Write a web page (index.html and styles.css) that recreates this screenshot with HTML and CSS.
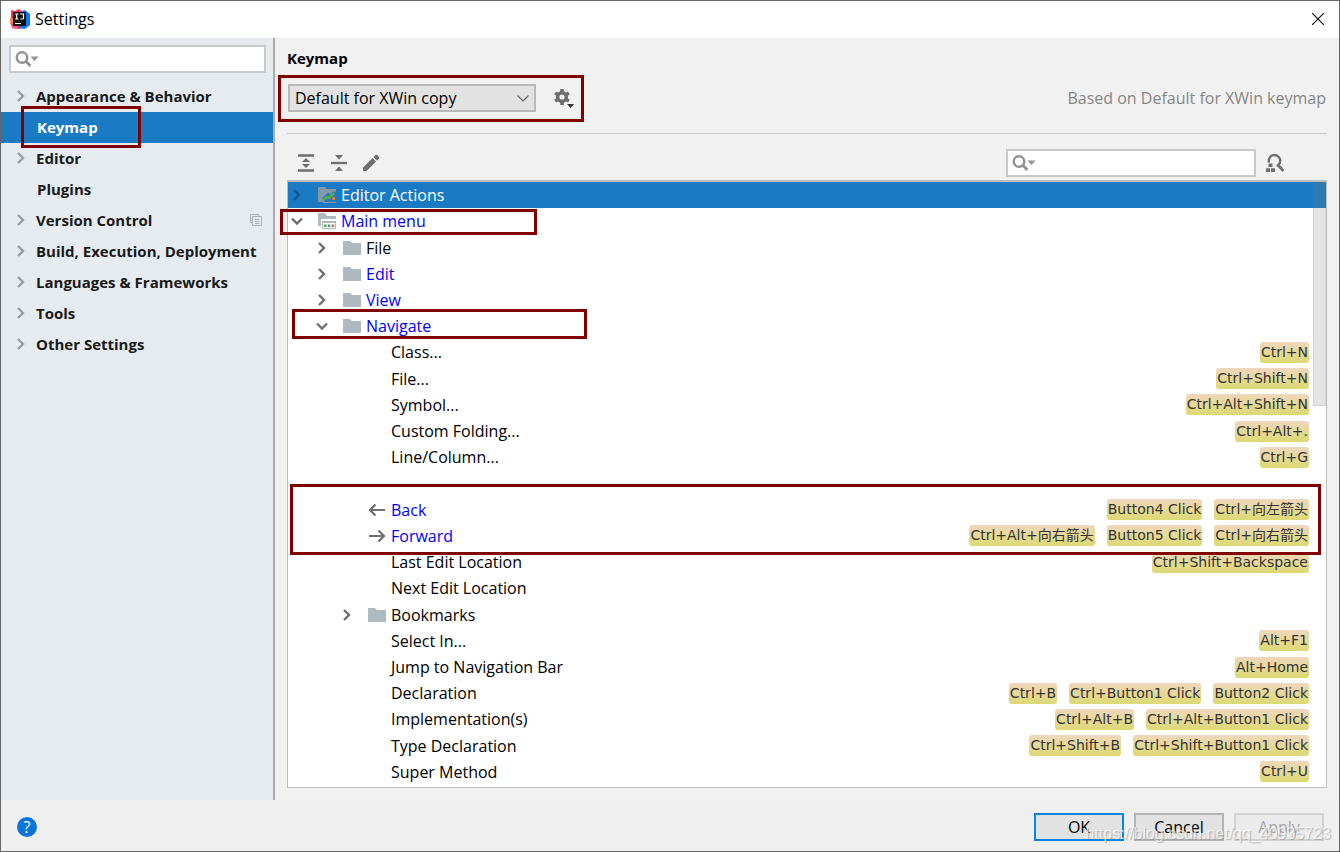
FILE: index.html
```html
<!DOCTYPE html>
<html lang="en">
<head>
<meta charset="utf-8">
<title>Settings</title>
<link rel="stylesheet" href="styles.css">
</head>
<body>
<svg class="sprite" aria-hidden="true">
  <symbol id="right" viewBox="0 0 12 12"><path d="M3 1l5 5-5 5" fill="none" stroke="currentColor" stroke-width="2.4"/></symbol>
  <symbol id="down" viewBox="0 0 12 12"><path d="M1 3.500l5 5 5-5" fill="none" stroke="currentColor" stroke-width="2.4"/></symbol>
  <symbol id="folder" viewBox="0 0 18 16"><path d="M0 1h7l2 2h9v12H0z" fill="#aeb9c0"/></symbol>
  <symbol id="search" viewBox="0 0 24 18"><circle cx="7" cy="7.500" r="5.300" fill="none" stroke="#919191" stroke-width="2.4"/><path d="M10.800 11.300l4.600 4.700" stroke="#919191" stroke-width="2.8"/><path d="M15.500 6.500h8l-4 4.500z" fill="#919191"/></symbol>
</svg>
<div class="window">
  <header class="titlebar">
    <svg class="logo" viewBox="0 0 20 20" aria-hidden="true">
      <path d="M1 1l4 1 4-2 4 3 1 9-4 8-8-1-2-6 1-4z" fill="#fe315d"/>
      <path d="M0 9l4 1v5l-4-1z" fill="#f98a4c"/>
      <path d="M12 2l3-1 5 4v11l-5 4-6-1z" fill="#087cfa"/>
      <path d="M2 14l6 3-1 3-5-1z" fill="#f05a78"/>
      <path d="M3 3h13v14H3z" fill="#111"/>
      <path d="M5 5h3.500M6.700 5v5M5 10h3.500M10 5h3.500v4q0 1-1 1h-2M5 14.500h6" fill="none" stroke="#fff" stroke-width="1.200"/>
    </svg>
    <h1 class="window-title">Settings</h1>
    <button class="close" aria-label="Close"><svg viewBox="0 0 12 12"><path d="M0 0l12 12M12 0L0 12" stroke="#000" stroke-width="1.1"/></svg></button>
  </header>

  <div class="body">
    <aside class="sidebar">
      <label class="search"><svg><use href="#search"/></svg><input type="text" aria-label="Search settings"></label>
      <nav>
        <ul class="nav">
          <li><svg class="chev"><use href="#right"/></svg><a href="#">Appearance &amp; Behavior</a></li>
          <li class="active"><a class="leaf" href="#">Keymap</a><span class="mark mark-nav"></span></li>
          <li><svg class="chev"><use href="#right"/></svg><a href="#">Editor</a></li>
          <li><a class="leaf" href="#">Plugins</a></li>
          <li><svg class="chev"><use href="#right"/></svg><a href="#">Version Control</a>
            <svg class="copy" viewBox="0 0 12 12"><path d="M.5 8.500v-8h8v1M2.500 2.500h9v9h-9zM5 5.500h4.500M5 7.500h4.500M5 9.500h4.500M.5 8.500h2" fill="none" stroke="#a9b4bc"/></svg></li>
          <li><svg class="chev"><use href="#right"/></svg><a href="#">Build, Execution, Deployment</a></li>
          <li><svg class="chev"><use href="#right"/></svg><a href="#">Languages &amp; Frameworks</a></li>
          <li><svg class="chev"><use href="#right"/></svg><a href="#">Tools</a></li>
          <li><svg class="chev"><use href="#right"/></svg><a href="#">Other Settings</a></li>
        </ul>
      </nav>
    </aside>

    <main class="content">
      <h2 class="heading">Keymap</h2>
      <div class="scheme">
        <div class="scheme-pick">
          <select aria-label="Keymap scheme"><option>Default for XWin copy</option></select>
          <svg class="select-arrow" viewBox="0 0 12 7"><path d="M.5.5L6 6 11.500.5" fill="none" stroke="#666" stroke-width="1.2"/></svg>
          <button class="icon-btn gear" aria-label="Scheme actions">
            <svg viewBox="0 0 20 20"><g fill="none" stroke="#6e6e6e"><circle cx="8" cy="9" r="4.300" stroke-width="3.400"/><path d="M8 1v3M8 14v3M1.100 5l2.600 1.500M12.300 11.500l2.600 1.500M1.100 13l2.600-1.500M12.300 6.500L14.900 5" stroke-width="3.600"/></g><path d="M13 16h7l-3.500 4z" fill="#333"/></svg>
          </button>
          <span class="mark mark-scheme"></span>
        </div>
        <span class="based">Based on Default for XWin keymap</span>
      </div>

      <div class="toolbar">
        <button class="icon-btn" aria-label="Expand all"><svg viewBox="0 0 18 18"><path d="M1 1.500h16M1 16.500h16" stroke="#6e6e6e" stroke-width="2.400"/><path d="M5 8l4-4 4 4zM5 10h8l-4 4z" fill="#6e6e6e"/></svg></button>
        <button class="icon-btn" aria-label="Collapse all"><svg viewBox="0 0 18 18"><path d="M1 9h16" stroke="#6e6e6e" stroke-width="2.400"/><path d="M5 1h8L9 5.500zM5 17h8l-4-4.500z" fill="#6e6e6e"/></svg></button>
        <button class="icon-btn" aria-label="Edit shortcut"><svg viewBox="0 0 18 18"><path d="M0 13.500L9.500 4 13 7.500 3.500 17H0zM10.500 3L12.500 1q.8-.7 1.600 0L16 2.900q.7.800 0 1.600L14 6.500z" fill="#6e6e6e"/></svg></button>
        <label class="search tree-search"><svg><use href="#search"/></svg><input type="text" aria-label="Search actions"></label>
        <button class="icon-btn" aria-label="Find by shortcut"><svg viewBox="0 0 18 18"><path d="M2.800 8.500V7a5.700 5.700 0 1 1 8 5" fill="none" stroke="#6e6e6e" stroke-width="2.400"/><path d="M12 11l5.500 6" stroke="#6e6e6e" stroke-width="2.800"/><path d="M2.500 9.500h4v3.500h-4zM0 14.200h4V18H0zM5 14.200h4V18H5z" fill="#6e6e6e"/></svg></button>
      </div>

      <div class="tree-box">
        <ul class="tree">
          <li class="selected"><svg class="chev"><use href="#right"/></svg><svg class="ico" viewBox="0 0 18 16"><path d="M0 0h7l2 2h9v2L6 15H0z" fill="#8397a5"/><path d="M6 13l4-4 2 2 5-5" fill="none" stroke="#1a7bc4" stroke-width="5"/><path d="M5 13.500l4-3.500 2 1 5-5" fill="none" stroke="#59a84b" stroke-width="2.600"/><path d="M14 10h3v3h-3z" fill="#d97745"/><path d="M5 16h13" stroke="#8397a5" stroke-width="2.400"/></svg><span class="name">Editor Actions</span></li>
          <li class="changed"><svg class="chev"><use href="#down"/></svg><svg class="ico" viewBox="0 0 18 16"><path d="M0 0h7l2 3h9v3H3v7H0z" fill="#aeb9c0"/><path d="M4.500 8.500h13v7h-13z" fill="#fff" stroke="#aeb9c0"/><path d="M4 9h14" stroke="#aeb9c0" stroke-width="2"/><path d="M6 11.500h2.500V14H6z" fill="#4fa844"/><path d="M9.800 11.500h2.500V14H9.800z" fill="#3592c4"/><path d="M13.600 11.500h2.500V14h-2.500z" fill="#e8642d"/></svg><span class="name">Main menu</span><span class="mark mark-main"></span></li>
          <li class="d1"><svg class="chev"><use href="#right"/></svg><svg class="ico"><use href="#folder"/></svg><span class="name">File</span></li>
          <li class="d1 changed"><svg class="chev"><use href="#right"/></svg><svg class="ico"><use href="#folder"/></svg><span class="name">Edit</span></li>
          <li class="d1 changed"><svg class="chev"><use href="#right"/></svg><svg class="ico"><use href="#folder"/></svg><span class="name">View</span></li>
          <li class="d1 changed"><svg class="chev"><use href="#down"/></svg><svg class="ico"><use href="#folder"/></svg><span class="name">Navigate</span><span class="mark mark-navigate"></span></li>
          <li class="leaf"><span class="name">Class...</span><kbd>Ctrl+N</kbd></li>
          <li class="leaf"><span class="name">File...</span><kbd>Ctrl+Shift+N</kbd></li>
          <li class="leaf"><span class="name">Symbol...</span><kbd>Ctrl+Alt+Shift+N</kbd></li>
          <li class="leaf"><span class="name">Custom Folding...</span><kbd>Ctrl+Alt+.</kbd></li>
          <li class="leaf"><span class="name">Line/Column...</span><kbd>Ctrl+G</kbd></li>
          <li class="leaf" role="separator"></li>
          <li class="d2 changed"><span class="chev"></span><svg class="ico" viewBox="0 0 18 16"><path d="M17 8H2M7.500 2.500L2 8l5.500 5.500" fill="none" stroke="#6e6e6e" stroke-width="2.200"/></svg><span class="name">Back</span><kbd>Button4 Click</kbd><kbd>Ctrl+向左箭头</kbd><span class="mark mark-history"></span></li>
          <li class="d2 changed"><span class="chev"></span><svg class="ico" viewBox="0 0 18 16"><path d="M1 8h15M10.500 2.500L16 8l-5.500 5.500" fill="none" stroke="#6e6e6e" stroke-width="2.200"/></svg><span class="name">Forward</span><kbd>Ctrl+Alt+向右箭头</kbd><kbd>Button5 Click</kbd><kbd>Ctrl+向右箭头</kbd></li>
          <li class="leaf"><span class="name">Last Edit Location</span><kbd>Ctrl+Shift+Backspace</kbd></li>
          <li class="leaf"><span class="name">Next Edit Location</span></li>
          <li class="d2"><svg class="chev"><use href="#right"/></svg><svg class="ico"><use href="#folder"/></svg><span class="name">Bookmarks</span></li>
          <li class="leaf"><span class="name">Select In...</span><kbd>Alt+F1</kbd></li>
          <li class="leaf"><span class="name">Jump to Navigation Bar</span><kbd>Alt+Home</kbd></li>
          <li class="leaf"><span class="name">Declaration</span><kbd>Ctrl+B</kbd><kbd>Ctrl+Button1 Click</kbd><kbd>Button2 Click</kbd></li>
          <li class="leaf"><span class="name">Implementation(s)</span><kbd>Ctrl+Alt+B</kbd><kbd>Ctrl+Alt+Button1 Click</kbd></li>
          <li class="leaf"><span class="name">Type Declaration</span><kbd>Ctrl+Shift+B</kbd><kbd>Ctrl+Shift+Button1 Click</kbd></li>
          <li class="leaf"><span class="name">Super Method</span><kbd>Ctrl+U</kbd></li>
        </ul>
        <span class="thumb"></span>
      </div>
    </main>
  </div>

  <footer class="footer">
    <button class="help" aria-label="Help">?</button>
    <button class="btn primary">OK</button>
    <button class="btn">Cancel</button>
    <button class="btn" disabled>Apply</button>
    <span class="watermark">https://blog.csdn.net/qq_40935723</span>
  </footer>
</div>
</body>
</html>
```
FILE: styles.css
```css
* { box-sizing: border-box; }
body {
  margin: 0;
  font: 16px/20px "Open Sans", "Noto Sans CJK SC", sans-serif;
  color: #000;
}
button, input, select { font: inherit; color: inherit; }
ul { list-style: none; margin: 0; padding: 0; }
svg { display: block; flex: none; }
.sprite { position: absolute; width: 0; height: 0; }

.window {
  display: flex;
  flex-direction: column;
  height: 100vh;
  min-height: 700px;
  border: 1px solid #666;
  background: #f1f1f1;
}

/* Title bar */
.titlebar {
  display: flex;
  align-items: center;
  height: 37px;
  flex: none;
  padding: 0 15px 1px 9px;
  background: #fff;
}
.logo { width: 20px; height: 20px; }
.window-title { flex: 1; margin: 0 0 0 5px; font-size: 16px; font-weight: 400; }
.close { padding: 0; border: 0; background: none; }
.close svg { width: 12px; height: 12px; }

.body { display: flex; flex: 1; min-height: 0; }

/* Sidebar */
.sidebar {
  width: 274px;
  flex: none;
  padding-top: 7px;
  border-right: 2px solid #aaa;
  background: #e5ebef;
}
.search {
  display: flex;
  align-items: center;
  height: 28px;
  padding-left: 4px;
  border: 2px solid #c8c8c8;
  background: #fff;
}
.search svg { width: 24px; height: 18px; }
.search input { flex: 1; min-width: 0; border: 0; outline: 0; background: none; }
.sidebar .search { margin: 0 7px 8px 8px; }
.nav li {
  position: relative;
  display: flex;
  align-items: center;
  height: 31px;
  padding: 0 11px 2px 14px;
}
.nav a { flex: 1; margin-left: 9px; color: #1a1a1a; font-size: 15px; font-weight: 700; text-decoration: none; white-space: nowrap; }
.nav a.leaf { margin-left: 22px; }
.nav .active { background: #1a7bc4; }
.nav .active a { color: #fff; }
.nav .chev { color: #9a9da0; }
.chev { width: 12px; height: 12px; flex: none; }
.copy { width: 12px; height: 12px; }

/* Annotation frames */
.mark { position: absolute; border: 3px solid #800000; pointer-events: none; z-index: 2; }
.mark-nav { left: 20px; top: -6px; width: 120px; height: 42px; }
.mark-scheme { inset: -9px -10px -10px -10px; }
.mark-main { left: -8px; top: 1px; width: 257px; height: 26px; }
.mark-navigate { left: 4px; top: -4px; width: 295px; height: 30px; }
.mark-history { left: 2px; right: 5px; top: -13px; height: 71px; }

/* Content */
.content {
  display: flex;
  flex-direction: column;
  flex: 1;
  min-width: 0;
  padding: 10px 12px 12px;
}
.heading { margin: 0; font-size: 15px; font-weight: 700; }
.scheme {
  display: flex;
  align-items: center;
  justify-content: space-between;
  padding: 16px 1px 21px;
  border-bottom: 1px solid #c9c9c9;
}
.scheme-pick { position: relative; display: flex; align-items: center; gap: 18px; }
.scheme-pick select {
  appearance: none;
  width: 248px;
  height: 28px;
  padding: 0 28px 0 5px;
  border: 2px solid #b9b9b9;
  border-radius: 0;
  background: #e2e2e2;
}
.select-arrow { position: absolute; left: 229px; width: 12px; height: 7px; pointer-events: none; }
.based { color: #868686; }
.icon-btn { padding: 0; border: 0; background: none; }
.icon-btn svg { width: 18px; height: 18px; }
.icon-btn.gear svg { width: 20px; height: 20px; }

.toolbar { display: flex; align-items: center; gap: 15px; padding: 15px 43px 3px 10px; }
.tree-search { width: 250px; margin-left: auto; }
.toolbar .tree-search + .icon-btn { margin-left: -5px; }

/* Action tree */
.tree-box {
  position: relative;
  display: flex;
  flex: 1;
  min-height: 0;
  border: 1px solid #bdbdbd;
  border-top-width: 2px;
  background: #fff;
}
.tree { display: grid; flex: 1; grid-auto-rows: 1fr; padding-bottom: 2px; }
.tree li {
  position: relative;
  display: flex;
  align-items: center;
  padding: 0 17px 0 3px;
  white-space: nowrap;
}
.tree .d1 { padding-left: 28px; }
.tree .d2 { padding-left: 53px; }
.tree .leaf { padding-left: 103px; }
.tree .chev { color: #6e6e6e; }
.tree .ico { width: 18px; height: 16px; margin: 0 5px 0 15px; }
.tree .name { flex: 1; }
.tree .changed .name { color: #00f; }
.tree .selected { background: #1a7bc4; }
.tree .selected .name { color: #fff; }
.tree .selected .chev { color: #155a8c; }
kbd {
  margin-left: 12px;
  padding: 0 1px;
  border-radius: 3px;
  background: linear-gradient(#f0d7bd, #dcd973);
  color: #333;
  font: 14px/21px "DejaVu Sans", "Noto Sans CJK SC", sans-serif;
}
.thumb {
  position: absolute;
  top: 0;
  right: 0;
  width: 13px;
  height: 37%;
  border: 1px solid rgba(110, 110, 110, .15);
  background: rgba(120, 120, 120, .2);
}

/* Footer */
.footer {
  position: relative;
  display: flex;
  align-items: center;
  gap: 10px;
  height: 51px;
  flex: none;
  padding: 2px 15px 0 16px;
  background: #efefef;
}
.help {
  width: 20px;
  height: 20px;
  margin-right: auto;
  padding: 0;
  border: 0;
  border-radius: 50%;
  background: #0a74da;
  color: #fff;
  line-height: 20px;
}
.btn { width: 90px; height: 28px; padding: 0; border: 2px solid #b4b4b4; background: #e2e2e2; }
.btn.primary { border-color: #0a84e4; }
.btn:disabled { border-color: #d2d2d2; background: #ebebeb; color: #a5a5a5; }
.watermark {
  position: absolute;
  right: 8px;
  bottom: 7px;
  color: rgba(255, 255, 255, .7);
  font-family: "Liberation Sans", sans-serif;
  text-shadow: 1px 1px 1px rgba(120, 120, 120, .5);
  pointer-events: none;
}
```
